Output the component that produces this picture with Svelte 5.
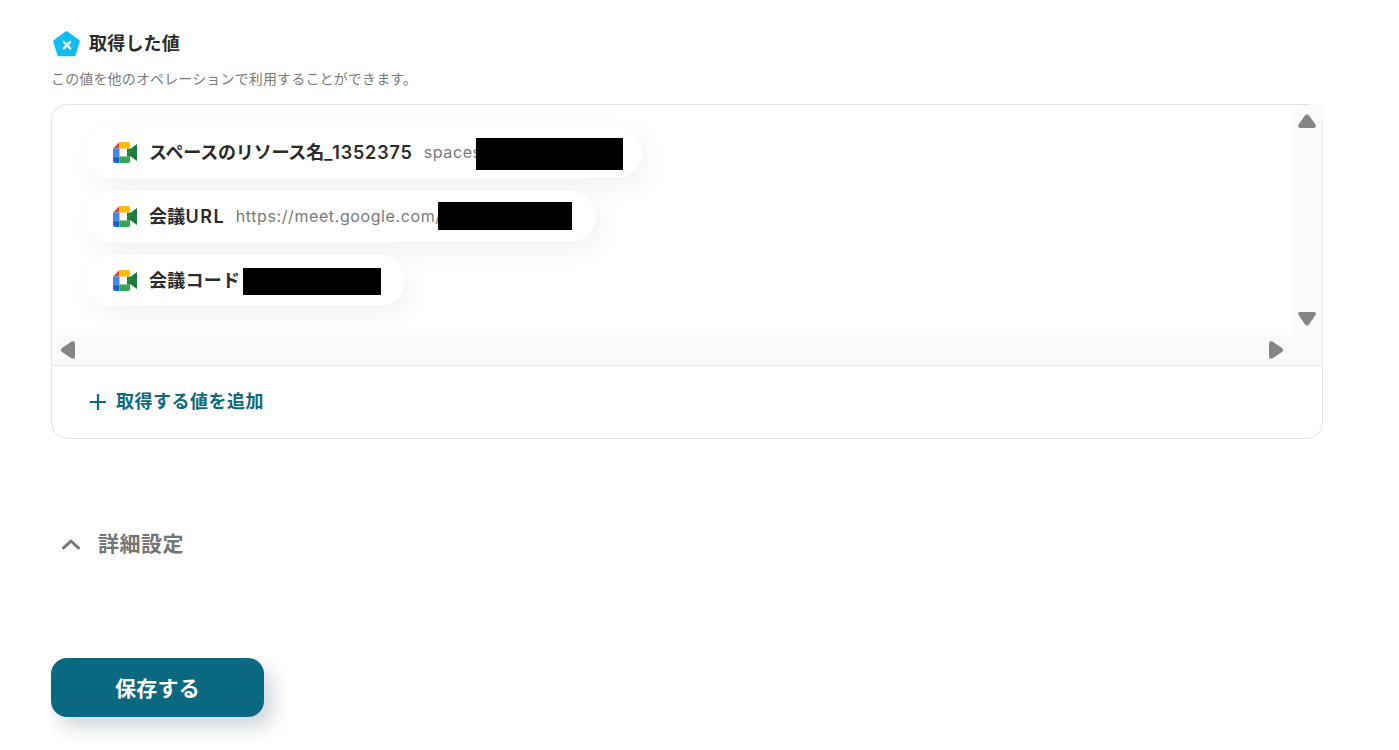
<script>
  const pills = [
    { cjk: 'スペースのリソース名_', latin: '1352375', kind: 'tight', value: 'spaces/', w: 147, h: 32, nameGap: 11, maskLeft: -12, maskTop: 2, pad: 19 },
    { cjk: '会議', latin: 'URL', kind: 'wide', value: 'https://meet.google.com/', w: 134, h: 28, nameGap: 10.5, maskLeft: -3.5, maskTop: -1, pad: 24 },
    { cjk: '会議コード', latin: '', kind: '', value: '', w: 138, h: 27, nameGap: 3, maskLeft: 0, maskTop: 2, pad: 24 }
  ];
</script>

<main class="page">
  <header class="title">
    <svg class="hex" width="28" height="28" viewBox="0 0 28 28" aria-hidden="true">
      <path d="M13.500 3 25 11.500 21 24.500H6L2 11.500Z" fill="#12bdee" stroke="#12bdee" stroke-width="3.500" stroke-linejoin="round"/>
      <path d="M10.800 12 17.200 18.500 M17.200 12 10.800 18.500" stroke="#fff" stroke-width="2.200" stroke-linecap="round" fill="none"/>
    </svg>
    <h2>取得した値</h2>
  </header>
  <p class="desc">この値を他のオペレーションで利用することができます。</p>

  <section class="box">
    <div class="scroller">
      <div class="content">
        {#each pills as p}
          <div class="pill" style="padding-right:{p.pad}px">
            <svg class="meet" width="24" height="21" viewBox="0 0 24 21" aria-hidden="true">
              <path d="M0 6.500 6.500 0V6.500Z" fill="#ea4335"/>
              <path d="M0 6.500H6.500V14.500H0Z" fill="#4285f4"/>
              <path d="M0 14.500H6.500V21H2A2 2 0 0 1 0 19Z" fill="#1967d2"/>
              <path d="M6.500 0H15A2 2 0 0 1 17 2V7L14 6.500H6.500Z" fill="#fbbc04"/>
              <path d="M6.500 14.500H14L17 14V19A2 2 0 0 1 15 21H6.500Z" fill="#34a853"/>
              <path d="M14 6.500 17 7 24 2V19L17 14 14 14.500Z" fill="#188038"/>
              <path d="M17 7V14L14 10.500Z" fill="#1e8e3e"/>
            </svg>
            <span class="name {p.kind}" style="margin-right:{p.nameGap}px">{p.cjk}<span class="latin">{p.latin}</span></span>
            {#if p.value}<span class="value">{p.value}</span>{/if}
            <span class="mask" style="width:{p.w}px;height:{p.h}px;margin-left:{p.maskLeft}px;margin-top:{p.maskTop}px"></span>
          </div>
        {/each}
      </div>
      <div class="vbar">
        <span class="tri up"></span>
        <span class="tri down"></span>
      </div>
      <div class="hbar">
        <span class="tri left"></span>
        <span class="tri right"></span>
      </div>
    </div>
    <div class="add">
      <svg width="18" height="18" viewBox="0 0 18 18" aria-hidden="true">
        <path d="M9 1V17M1 9H17" stroke="#0b6982" stroke-width="2.200" fill="none"/>
      </svg>
      <span>取得する値を追加</span>
    </div>
  </section>

  <div class="details">
    <svg width="20" height="12" viewBox="0 0 20 12" aria-hidden="true">
      <path d="M2.500 10 10 3l7.500 7" stroke="#757575" stroke-width="3" fill="none" stroke-linecap="round" stroke-linejoin="round"/>
    </svg>
    <span>詳細設定</span>
  </div>

  <div class="save-clip">
    <button class="save">保存する</button>
  </div>
</main>

<style>
  :global(body) {
    margin: 0;
    background: #fff;
    font-family: Inter, "Noto Sans CJK JP", sans-serif;
  }
  .page {
    width: 1272px;
    height: 750px;
    margin-left: 51px;
    padding-top: 29px;
    box-sizing: border-box;
    overflow: hidden;
  }
  .title {
    display: flex;
    align-items: center;
    gap: 8px;
    height: 29px;
    margin-left: 2px;
  }
  .hex { flex: none; }
  h2 {
    margin: 0;
    font-size: 18px;
    font-weight: 600;
    letter-spacing: 0.2px;
    color: #2b2b2b;
    line-height: 29px;
  }
  .desc {
    margin: 11px 0 0;
    font-size: 14px;
    line-height: 20px;
    letter-spacing: 0.15px;
    color: #7a7a7a;
  }
  .box {
    margin-top: 15px;
    height: 335px;
    box-sizing: border-box;
    border: 1px solid #e4e4e4;
    border-radius: 16px;
  }
  .scroller {
    display: grid;
    grid-template-columns: 1241px 29px;
    grid-template-rows: 230px 30px;
    height: 260px;
    border-bottom: 1px solid #e4e4e4;
  }
  .content {
    padding: 22px 0 0 33px;
    display: flex;
    flex-direction: column;
    align-items: flex-start;
    gap: 13px;
  }
  .pill {
    display: flex;
    align-items: center;
    height: 51px;
    padding-left: 28px;
    border-radius: 26px;
    background: #fff;
    box-shadow: 6px 8px 28px rgba(0, 0, 0, 0.06);
  }
  .meet { flex: none; margin-right: 12px; margin-bottom: 1px; }
  .name {
    font-size: 18px;
    font-weight: 600;
    letter-spacing: 0.25px;
    color: #2b2b2b;
    white-space: nowrap;
    margin-bottom: 3px;
  }
  .tight { letter-spacing: -0.2px; }
  .tight .latin { letter-spacing: 0.85px; }
  .wide .latin { letter-spacing: 1.5px; }
  .value {
    font-size: 16px;
    color: #7a7a7a;
    letter-spacing: 0.6px;
    white-space: nowrap;
    margin-bottom: 2px;
  }
  .mask {
    display: block;
    flex: none;
    background: #000;
  }
  .vbar {
    grid-row: 1 / 3;
    grid-column: 2;
    background: #fbfbfb;
    position: relative;
  }
  .hbar {
    grid-row: 2;
    grid-column: 1;
    background: #fbfbfb;
    position: relative;
  }
  .tri {
    position: absolute;
    width: 18px;
    height: 14px;
    background: #858585;
  }
  .up { top: 9px; left: 5px; clip-path: path("M7 1.500 Q9 -.5 11 1.500 L17.500 10.500 Q18.500 14 15.500 14 H2.500 Q-.5 14 .5 10.500Z"); }
  .down { top: 207px; left: 5px; clip-path: path("M2 0 H16 Q18.500 0 17.500 3 L11 12.500 Q9 14.500 7 12.500 L.5 3 Q-.5 0 2 0Z"); }
  .left, .right { width: 14px; height: 18px; top: 6px; }
  .left { left: 9px; clip-path: path("M1 7 L10.500 .5 Q14 -.5 14 2.500 V15.500 Q14 18.500 10.500 17.500 L1 11 Q-1 9 1 7Z"); }
  .right { left: 1217px; clip-path: path("M0 2.500 Q0 -.5 3.500 .5 L13 7 Q15 9 13 11 L3.500 17.500 Q0 18.500 0 15.500Z"); }
  .add {
    display: flex;
    align-items: center;
    gap: 9px;
    height: 73px;
    padding-left: 37px;
    color: #0b6982;
    font-size: 18px;
    font-weight: 600;
    letter-spacing: 0.5px;
  }
  .add span { margin-bottom: 5px; }
  .add svg { margin-bottom: 1px; }
  .details {
    display: flex;
    align-items: center;
    gap: 17px;
    margin-top: 90px;
    height: 30px;
    padding-left: 10px;
    color: #757575;
    font-size: 21px;
    font-weight: 600;
    letter-spacing: 0.5px;
  }
  .details span { margin-bottom: 4px; }
  .save-clip {
    margin-top: 99px;
    width: 240px;
    height: 92px;
    overflow: hidden;
  }
  .save {
    display: block;
    width: 213px;
    height: 59px;
    border: 0;
    border-radius: 16px;
    background: #0a6981;
    color: #fff;
    font: 600 21px Inter, "Noto Sans CJK JP", sans-serif;
    letter-spacing: 0.3px;
    padding-bottom: 3px;
    box-shadow: 8px 10px 20px rgba(30, 60, 80, 0.22);
  }
</style>
